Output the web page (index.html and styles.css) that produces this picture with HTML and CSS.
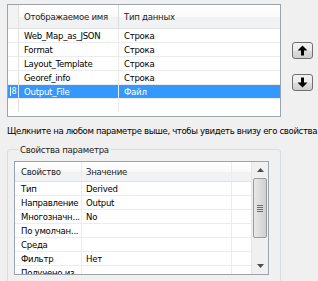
FILE: index.html
```html
<!DOCTYPE html>
<html lang="ru">
<head>
  <meta charset="UTF-8" />
  <title>Параметры</title>
  <link rel="stylesheet" href="styles.css">
</head>
<body>
  <div class="top">
    <div class="params">
      <div class="prow head">
        <div class="rh"></div>
        <div class="cell">Отображаемое имя</div>
        <div class="cell">Тип данных</div>
      </div>
      <div class="prow">
        <div class="rh"></div>
        <div class="cell">Web_Map_as_JSON</div>
        <div class="cell">Строка</div>
      </div>
      <div class="prow">
        <div class="rh"></div>
        <div class="cell">Format</div>
        <div class="cell">Строка</div>
      </div>
      <div class="prow">
        <div class="rh"></div>
        <div class="cell">Layout_Template</div>
        <div class="cell">Строка</div>
      </div>
      <div class="prow">
        <div class="rh"></div>
        <div class="cell">Georef_info</div>
        <div class="cell">Строка</div>
      </div>
      <div class="prow selected">
        <div class="rh"><span class="mark">8</span></div>
        <div class="cell">Output_File</div>
        <div class="cell">Файл</div>
      </div>
      <div class="prow empty">
        <div class="rh"></div>
        <div class="cell"></div>
        <div class="cell"></div>
      </div>
    </div>

    <div class="arrows">
      <button class="arrow-btn" title="Вверх">
        <svg width="11" height="11" viewBox="0 0 11 11"><path d="M5.5 0.5 L10.5 5.5 L7 5.5 L7 10.5 L4 10.5 L4 5.5 L0.5 5.5 Z" fill="#000"/></svg>
      </button>
      <button class="arrow-btn" title="Вниз">
        <svg width="11" height="11" viewBox="0 0 11 11"><path d="M5.5 10.5 L10.5 5.5 L7 5.5 L7 0.5 L4 0.5 L4 5.5 L0.5 5.5 Z" fill="#000"/></svg>
      </button>
    </div>
  </div>

  <p class="hint">Щелкните на любом параметре выше, чтобы увидеть внизу его свойства.</p>

  <fieldset class="group">
    <legend>Свойства параметра</legend>
    <div class="props">
      <div class="props-body">
        <div class="krow head">
          <div class="cell">Свойство</div>
          <div class="cell">Значение</div>
          <div class="cell"></div>
        </div>
        <div class="krow"><div class="cell">Тип</div><div class="cell">Derived</div><div class="cell"></div></div>
        <div class="krow"><div class="cell">Направление</div><div class="cell">Output</div><div class="cell"></div></div>
        <div class="krow"><div class="cell">Многозначн...</div><div class="cell">No</div><div class="cell"></div></div>
        <div class="krow"><div class="cell">По умолчан...</div><div class="cell"></div><div class="cell"></div></div>
        <div class="krow"><div class="cell">Среда</div><div class="cell"></div><div class="cell"></div></div>
        <div class="krow"><div class="cell">Фильтр</div><div class="cell">Нет</div><div class="cell"></div></div>
        <div class="krow"><div class="cell">Получено из</div><div class="cell"></div><div class="cell"></div></div>
      </div>
      <div class="scrollbar">
        <div class="sb-arrow">
          <svg width="7" height="4" viewBox="0 0 7 4"><path d="M3.5 0 L7 4 L0 4 Z" fill="#4d4d4d"/></svg>
        </div>
        <div class="sb-thumb">
          <span></span><span></span><span></span><span></span>
        </div>
        <div class="sb-track"></div>
        <div class="sb-arrow">
          <svg width="7" height="4" viewBox="0 0 7 4"><path d="M0 0 L7 0 L3.5 4 Z" fill="#4d4d4d"/></svg>
        </div>
      </div>
    </div>
  </fieldset>
</body>
</html>
```

FILE: styles.css
```css
body {
  margin: 0;
  background: #f0f0f0;
  font-family: "DejaVu Sans Condensed", "DejaVu Sans", sans-serif;
  font-size: 9.5px;
  letter-spacing: -0.25px;
  color: #000;
  overflow: hidden;
}

.top {
  display: flex;
  padding: 4px 0 0 7px;
}

.params {
  width: 272px;
  height: 111px;
  border: 1px solid #9ba3ab;
  background: #fff;
  overflow: hidden;
}

.prow {
  display: grid;
  grid-template-columns: 11px 99px 1fr;
  height: 13px;
  border-bottom: 1px solid #ececec;
}

.prow .rh {
  border-right: 1px solid #e2e2e2;
  display: flex;
  align-items: center;
  justify-content: center;
}

.prow .cell {
  padding-left: 5px;
  line-height: 13px;
  white-space: nowrap;
  overflow: hidden;
}

.prow .cell + .cell {
  border-left: 1px solid #ececec;
}

.prow.head {
  height: 23px;
  background: linear-gradient(#fff 0%, #fafafa 50%, #f1f2f4 51%, #f1f2f4 100%);
  border-bottom: 1px solid #e0e0e0;
}

.prow.head .rh {
  background: #f3f3f3;
}

.prow.head .cell {
  line-height: 23px;
  color: #222;
}

.prow.head .cell + .cell {
  border-left: 1px solid #dcdcdc;
}

.prow.selected .cell {
  background: #3399ff;
  color: #fff;
}

.prow.selected .rh {
  background: #3399ff;
}

.mark {
  color: #fff;
  font-size: 9px;
  line-height: 9px;
  border-left: 1px solid #fff;
  padding-left: 1px;
}

.prow.empty {
  border-bottom: none;
}

.arrows {
  display: flex;
  flex-direction: column;
  gap: 15px;
  margin: 38px 0 0 11px;
}

.arrow-btn {
  width: 21px;
  height: 17px;
  padding: 0;
  border: 1px solid #707070;
  border-radius: 3px;
  background: linear-gradient(#f2f2f2 0%, #ebebeb 50%, #dddddd 51%, #cfcfcf 100%);
  display: flex;
  align-items: center;
  justify-content: center;
}

.hint {
  margin: 7px 0 0 7px;
  line-height: 13px;
  letter-spacing: -0.35px;
  white-space: nowrap;
}

.group {
  margin: 6px 0 0 7px;
  width: 274px;
  box-sizing: border-box;
  padding: 5px 0 20px 6px;
  border: 1px solid #d5dfe5;
  border-radius: 3px;
}

.group legend {
  margin-left: 4px;
  padding: 0 2px;
  line-height: 13px;
  color: #222;
}

.props {
  width: 253px;
  height: 112px;
  border: 1px solid #9ba3ab;
  background: #fff;
  display: flex;
  overflow: hidden;
}

.props-body {
  flex: 1;
}

.krow {
  display: grid;
  grid-template-columns: 66px 150px 1fr;
  height: 13px;
  border-bottom: 1px solid #ececec;
}

.krow .cell {
  padding-left: 6px;
  line-height: 13px;
  white-space: nowrap;
  overflow: hidden;
}

.krow .cell + .cell {
  border-left: 1px solid #ececec;
  padding-left: 4px;
}

.krow.head {
  height: 19px;
  background: linear-gradient(#fff 0%, #fafafa 50%, #f1f2f4 51%, #f1f2f4 100%);
  border-bottom: 1px solid #e0e0e0;
}

.krow.head .cell {
  line-height: 19px;
  color: #222;
}

.scrollbar {
  width: 16px;
  background: #f0f0f0;
  border-left: 1px solid #e6e6e6;
  display: flex;
  flex-direction: column;
}

.sb-arrow {
  height: 16px;
  display: flex;
  align-items: center;
  justify-content: center;
}

.sb-thumb {
  height: 58px;
  margin: 0 1px;
  border: 1px solid #9a9a9a;
  border-radius: 2px;
  background: linear-gradient(90deg, #e8e8e8, #dadada 60%, #cfcfcf);
  display: flex;
  flex-direction: column;
  align-items: center;
  justify-content: center;
  gap: 1px;
}

.sb-thumb span {
  width: 6px;
  height: 1px;
  background: #6e6e6e;
}

.sb-track {
  flex: 1;
}
```
